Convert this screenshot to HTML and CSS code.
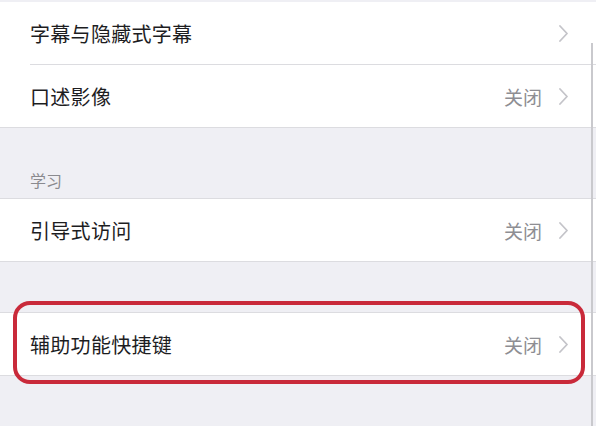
FILE: index.html
```html
<!DOCTYPE html>
<html lang="zh-CN">
<head>
<meta charset="utf-8">
<link rel="stylesheet" href="styles.css">
</head>
<body>
<div class="screen">
  <div class="group group-first">
    <div class="row">
      <span class="label">字幕与隐藏式字幕</span>
      <span class="detail"><svg class="chev" viewBox="0 0 9 17"><path d="M1 1 L8 8.5 L1 16" /></svg></span>
    </div>
    <div class="sep"></div>
    <div class="row row-tall">
      <span class="label">口述影像</span>
      <span class="detail"><span class="value">关闭</span><svg class="chev" viewBox="0 0 9 17"><path d="M1 1 L8 8.5 L1 16" /></svg></span>
    </div>
  </div>
  <div class="section-header">学习</div>
  <div class="group">
    <div class="row">
      <span class="label">引导式访问</span>
      <span class="detail"><span class="value">关闭</span><svg class="chev" viewBox="0 0 9 17"><path d="M1 1 L8 8.5 L1 16" /></svg></span>
    </div>
  </div>
  <div class="spacer"></div>
  <div class="group highlighted">
    <div class="row">
      <span class="label">辅助功能快捷键</span>
      <span class="detail"><span class="value">关闭</span><svg class="chev" viewBox="0 0 9 17"><path d="M1 1 L8 8.5 L1 16" /></svg></span>
    </div>
    <div class="mark"></div>
  </div>
  <div class="scroll-indicator"></div>
</div>
</body>
</html>
```

FILE: styles.css
```css
html, body {
  margin: 0;
  padding: 0;
  background: #efeff4;
}
body {
  font-family: "Noto Sans CJK SC", "Noto Sans", sans-serif;
  width: 596px;
  height: 426px;
  overflow: hidden;
}
.screen {
  position: relative;
  height: 426px;
  padding-top: 2px;
  box-sizing: border-box;
}
.group {
  background: #ffffff;
  border-top: 1px solid #dcdce0;
  border-bottom: 1px solid #dcdce0;
}
.group-first {
  border-top: none;
}
.row {
  height: 62px;
  display: flex;
  align-items: center;
  justify-content: space-between;
  padding: 0 28px 0 30px;
}
.row-tall {
  height: 62px;
}
.sep {
  height: 1px;
  background: #dcdce0;
  margin-left: 30px;
}
.label {
  font-size: 20px;
  color: #1d1d1f;
  letter-spacing: 0.3px;
}
.detail {
  display: flex;
  align-items: center;
  gap: 17px;
}
.value {
  font-size: 19px;
  color: #8e8e93;
}
.chev {
  width: 9px;
  height: 17px;
  fill: none;
  stroke: #c4c4c9;
  stroke-width: 1.8;
  stroke-linecap: round;
  stroke-linejoin: round;
}
.section-header {
  height: 70px;
  box-sizing: border-box;
  padding: 0 30px 6px;
  display: flex;
  align-items: flex-end;
  font-size: 16px;
  color: #8a8a8f;
}
.spacer {
  height: 50px;
}
.highlighted {
  position: relative;
}
.mark {
  position: absolute;
  left: 13px;
  right: 11px;
  top: -12px;
  bottom: -9px;
  border: 4px solid #c92a3a;
  border-radius: 17px;
  pointer-events: none;
}
.scroll-indicator {
  position: absolute;
  left: 591px;
  top: 43px;
  bottom: 0;
  width: 2px;
  background: #c9c9cd;
}
```
